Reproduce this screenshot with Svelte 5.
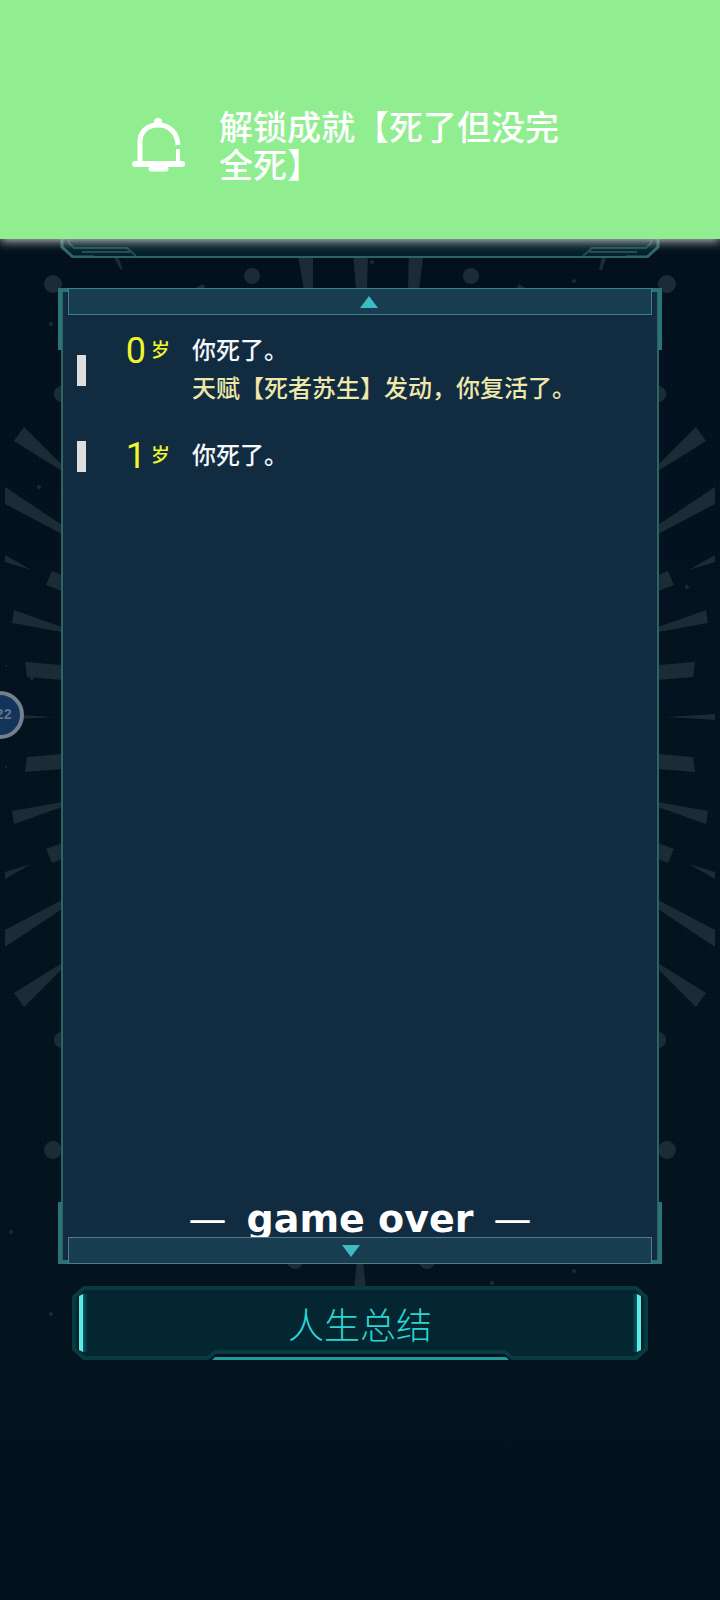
<script>
  const toast = "解锁成就【死了但没完全死】";

  const records = [
    {
      age: 0,
      events: [
        { text: "你死了。", talent: false },
        { text: "天赋【死者苏生】发动，你复活了。", talent: true },
      ],
    },
    {
      age: 1,
      events: [{ text: "你死了。", talent: false }],
    },
  ];

  // upper left quarter of the burst, mirrored for the other three
  const rays = [
    "14,441 24,427 62,465 62,471",
    "5,487 5,504 62,534 62,525",
    "5,555 5,562 31,570",
    "52,571 46,585 62,591 62,575",
    "14,610 12,623 62,632 62,627",
    "25,662 27,677 62,680 62,665",
    "5,714 5,717 52,717",
  ];

  const dots = [
    [39, 487, 2],
    [51, 324, 2],
    [372, 262, 2],
    [574, 281, 2],
    [687, 587, 2],
    [32, 678, 2],
    [6, 666, 1],
    [6, 767, 1],
    [11, 1232, 2],
    [51, 1314, 2],
    [492, 1283, 2],
    [574, 1271, 2],
    [252, 276, 8],
    [471, 276, 8],
    [295, 1261, 8],
    [427, 1261, 8],
  ];

  let log;

  function scrollLog(step) {
    log.scrollBy({ top: step, behavior: "smooth" });
  }
</script>

<div class="page">
  <svg class="burst" viewBox="0 0 720 1600" preserveAspectRatio="xMidYMid slice" aria-hidden="true">
    {#each ["", "translate(720 0) scale(-1 1)", "translate(0 1434) scale(1 -1)", "translate(720 1434) scale(-1 -1)"] as flip}
      <g transform={flip}>
        {#each rays as points}
          <polygon {points} />
        {/each}
        <circle cx="53" cy="284" r="9" />
        <circle cx="62" cy="394" r="8" />
      </g>
    {/each}
    <polygon points="297,250 313,250 313,290 304,290" />
    <polygon points="353,250 368,250 367,290 356,290" />
    <polygon points="409,250 424,250 419,290 408,290" />
    <polygon points="357,1260 363,1260 366,1290 354,1290" />
    <polygon points="113,256 118,256 123,270 120,269" />
    <polygon points="607,256 602,256 599,270 602,270" />
    <polygon points="193,289 203,284 206,289" />
    <polygon points="527,289 519,284 516,289" />
    {#each dots as [cx, cy, r]}
      <circle {cx} {cy} {r} />
    {/each}
  </svg>

  <main>
    <svg class="status" viewBox="0 0 600 118" preserveAspectRatio="none" aria-hidden="true">
      <path d="M2 2V107L13 117H587L598 107V2Z" fill="#04202c" />
      <path d="M2 0V107L13 117H34M566 117H587L598 107V0" fill="none" stroke="#2b6768" stroke-width="3" />
      <path d="M13 117H587" fill="none" stroke="#2a6466" stroke-width="2" />
      <path d="M9 92V103L14 108H67L76 116M22 112H71M591 92V103L586 108H532L523 116M577 112H529" fill="none" stroke="#204e56" stroke-width="2" />
    </svg>

    <section class="panel">
      <span class="corner tl"></span>
      <span class="corner tr"></span>
      <span class="corner bl"></span>
      <span class="corner br"></span>

      <button class="scroll up" aria-label="向上" onclick={() => scrollLog(-120)}>
        <svg width="18" height="12" viewBox="0 0 18 12"><path d="M9 0L18 12H0Z" /></svg>
      </button>

      <ul class="log" bind:this={log}>
        {#each records as record}
          <li>
            <span class="mark"></span>
            <span class="age">{record.age}<small>岁</small></span>
            <div class="events">
              {#each record.events as event}
                <p class:talent={event.talent}>{event.text}</p>
              {/each}
            </div>
          </li>
        {/each}
      </ul>

      <p class="over"><span>—</span><strong>game over</strong><span>—</span></p>

      <button class="scroll down" aria-label="向下" onclick={() => scrollLog(120)}>
        <svg width="18" height="12" viewBox="0 0 18 12"><path d="M0 0H18L9 12Z" /></svg>
      </button>
    </section>

    <button class="summary">
      <svg viewBox="0 0 576 74" preserveAspectRatio="none" aria-hidden="true">
        <defs>
          <linearGradient id="glow">
            <stop offset="0" stop-color="#125a60" />
            <stop offset="1" stop-color="#125a60" stop-opacity="0" />
          </linearGradient>
        </defs>
        <path d="M12 2H564L574 11V63L564 72H440L433 66H143L136 72H12L2 63V11Z" fill="#042630" stroke="#083a40" stroke-width="4" stroke-linejoin="round" />
        <rect x="11" y="8" width="5" height="58" fill="url(#glow)" />
        <rect x="560" y="8" width="5" height="58" fill="url(#glow)" transform="rotate(180 562.5 37)" />
        <path d="M7 10L11 8V66L7 64Z" fill="#5cece8" />
        <path d="M565 8L569 10V64L565 66Z" fill="#5cece8" />
        <path d="M143 71H434L437 74H140Z" fill="#219a97" />
      </svg>
      <span>人生总结</span>
    </button>
  </main>

  <button class="timer">22</button>

  <div class="toast" role="status">
    <svg width="54" height="58" viewBox="0 0 54 58" fill="none" stroke="#fff" stroke-width="5" aria-hidden="true">
      <path d="M9 46V24C9 13 17 7 27 7C38 7 46 14 47 27" />
      <path d="M47 31V46" stroke-width="4" />
      <path d="M4 46H51" stroke-width="6" stroke-linecap="round" />
      <path d="M20 51H35" stroke-linecap="round" />
      <circle cx="27" cy="4" r="4" fill="#fff" stroke="none" />
    </svg>
    <p>{toast}</p>
  </div>
</div>

<style>
  :global(body) {
    margin: 0;
    background: #020f1c;
  }
  .page {
    position: relative;
    min-height: 100vh;
    overflow: hidden;
    display: flex;
    color: #fff;
    font-family: Roboto, "Noto Sans CJK SC", sans-serif;
    background:
      repeating-linear-gradient(0deg, rgba(0, 0, 0, 0.12) 0 1px, transparent 1px 4px),
      repeating-linear-gradient(90deg, rgba(0, 0, 0, 0.12) 0 1px, transparent 1px 4px),
      linear-gradient(#03111f, #041522 70%, #03121f);
  }
  p {
    margin: 0;
  }
  button {
    font: inherit;
    cursor: pointer;
  }
  .burst {
    position: absolute;
    inset: 0;
    width: 100%;
    height: 100%;
    fill: #1c2c37;
  }
  main {
    position: relative;
    flex: 1;
    display: flex;
    flex-direction: column;
    box-sizing: border-box;
    padding: 140px 60px 240px;
  }
  .status {
    width: 100%;
    height: 118px;
    margin-bottom: 30px;
  }

  .panel {
    position: relative;
    flex: 1;
    display: flex;
    flex-direction: column;
    box-sizing: border-box;
    border: solid #2a6466;
    border-width: 0 2px;
    background: #112b40;
    margin: 0 1px 22px;
  }
  .corner {
    position: absolute;
    width: 12px;
    height: 62px;
    box-sizing: border-box;
    border: 0 solid #2b7375;
  }
  .tl {
    top: 0;
    left: -5px;
    border-width: 4px 0 0 4px;
  }
  .tr {
    top: 0;
    right: -5px;
    border-width: 4px 4px 0 0;
  }
  .bl {
    bottom: 0;
    left: -5px;
    border-width: 0 0 4px 4px;
  }
  .br {
    bottom: 0;
    right: -5px;
    border-width: 0 4px 4px 0;
  }
  .scroll {
    position: relative;
    display: flex;
    align-items: center;
    justify-content: center;
    box-sizing: border-box;
    height: 27px;
    margin: 0 5px;
    background: #193d50;
    border: 1px solid #3b8389;
  }
  .scroll path {
    fill: #3fbcc2;
  }
  .up {
    padding: 0 0 0 18px;
  }
  .down {
    padding: 0 18px 0 0;
    border-color: #537c8a;
  }

  .log {
    flex: 1 1 0;
    display: flex;
    flex-direction: column;
    gap: 29px;
    overflow: auto;
    list-style: none;
    margin: 0;
    padding: 17px 14px;
  }
  .log li {
    display: grid;
    grid-template-columns: 9px 84px 1fr;
  }
  .mark {
    align-self: center;
    height: 31px;
    background: #dedede;
  }
  .age {
    display: flex;
    align-items: center;
    justify-content: flex-end;
    gap: 5px;
    height: 38px;
    color: #f0f62e;
    font-size: 36px;
    line-height: 38px;
  }
  .age small {
    font-size: 19px;
    font-weight: 500;
  }
  .events {
    padding-left: 22px;
    font-size: 24px;
    font-weight: 500;
    line-height: 38px;
    color: #f4f8fb;
  }
  .talent {
    color: #eee8aa;
  }
  .over {
    display: flex;
    align-items: center;
    justify-content: center;
    gap: 20px;
    height: 36px;
    font-family: "DejaVu Sans", sans-serif;
    font-size: 38px;
    line-height: 36px;
  }

  .summary {
    position: relative;
    display: flex;
    align-items: center;
    justify-content: center;
    height: 74px;
    margin: 0 12px;
    padding: 0;
    border: 0;
    background: none;
    color: #2ad5d3;
    font-size: 36px;
    font-weight: 300;
  }
  .summary svg {
    position: absolute;
    inset: 0;
    width: 100%;
    height: 100%;
  }
  .summary span {
    position: relative;
  }

  .timer {
    position: absolute;
    top: 691px;
    left: -24px;
    width: 48px;
    height: 48px;
    box-sizing: border-box;
    padding: 0 8px 0 0;
    border: 4px solid #74808c;
    border-radius: 50%;
    background: #12345a;
    color: #65748a;
    font-family: "Liberation Mono", monospace;
    font-size: 14px;
    font-weight: 700;
    text-align: right;
  }

  .toast {
    position: absolute;
    top: 0;
    left: 0;
    right: 0;
    display: flex;
    align-items: center;
    gap: 34px;
    padding: 109px 140px 54px 131px;
    background: #90ee90;
    box-shadow: 0 2px 10px #c8c8c8;
  }
  .toast svg {
    flex: none;
  }
  .toast p {
    font-size: 34px;
    font-weight: 500;
    line-height: 38px;
  }
</style>
